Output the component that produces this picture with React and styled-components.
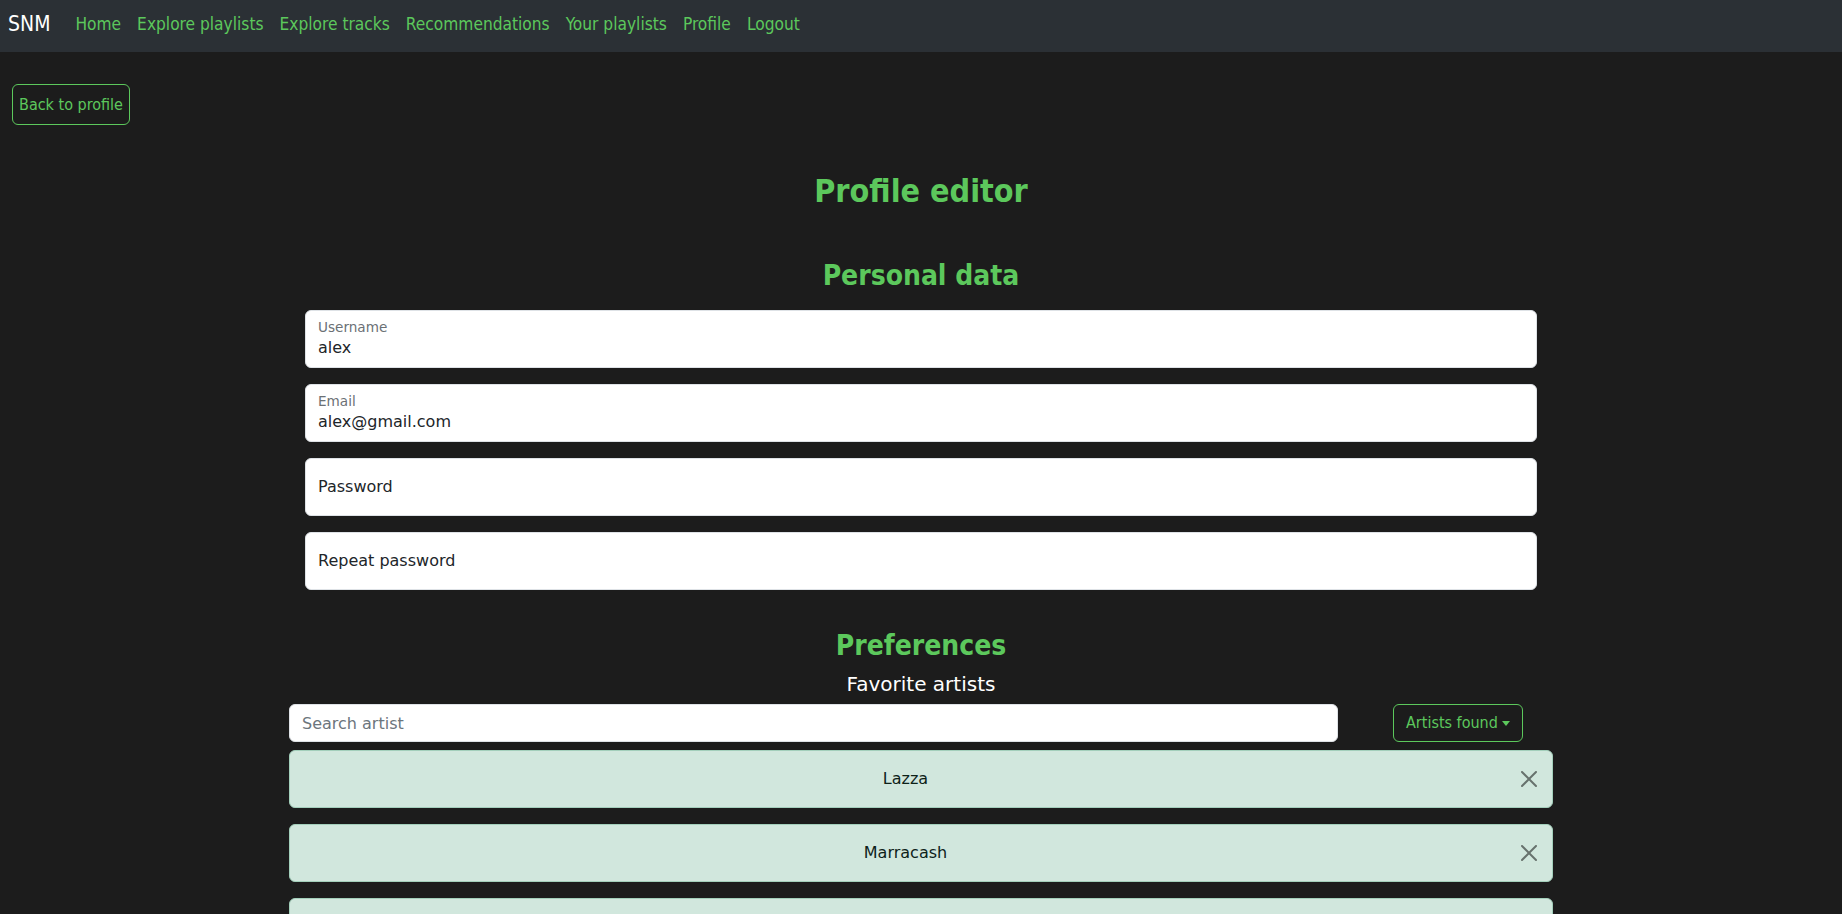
import React from 'react';
import styled, { createGlobalStyle } from 'styled-components';

const GREEN = '#5cc85c';

const GlobalStyle = createGlobalStyle`
  html {
    scrollbar-width: none;
  }
  body {
    margin: 0;
    background: #1c1c1c;
    font-family: "DejaVu Sans", Verdana, sans-serif;
  }
`;

const Navbar = styled.nav`
  display: flex;
  align-items: center;
  height: 52px;
  padding: 0 8px 4px;
  box-sizing: border-box;
  background: #2b3035;
  font-family: "DejaVu Sans Condensed", "DejaVu Sans", sans-serif;
  font-stretch: condensed;
`;

const Brand = styled.a`
  color: #fff;
  font-size: 21px;
  margin-right: 17px;
  text-decoration: none;
`;

const NavLink = styled.a`
  color: ${GREEN};
  font-size: 17.2px;
  padding: 0 8px;
  text-decoration: none;
`;

const Main = styled.main`
  padding: 32px 12px 0;
  display: flex;
  flex-direction: column;
`;

const OutlineButton = styled.button`
  display: inline-flex;
  align-items: center;
  background: transparent;
  color: ${GREEN};
  border: 1px solid ${GREEN};
  border-radius: 6px;
  font-family: "DejaVu Sans Condensed", "DejaVu Sans", sans-serif;
  font-stretch: condensed;
  font-size: 16px;
  line-height: ${p => p.$lh || '24px'};
  padding: ${p => p.$pad || '6px 12px'};
  cursor: pointer;
`;

const BackButton = styled(OutlineButton)`
  align-self: flex-start;
`;

const Caret = styled.span`
  display: inline-block;
  margin-left: 4px;
  border-top: 5px solid ${GREEN};
  border-left: 4px solid transparent;
  border-right: 4px solid transparent;
`;

const Content = styled.section`
  width: 1264px;
  margin: 0 auto;
  display: flex;
  flex-direction: column;
`;

const Heading = styled.h2`
  margin: ${p => p.$mt}px 0 0;
  text-align: center;
  color: ${GREEN};
  font-family: "DejaVu Sans Condensed", "DejaVu Sans", sans-serif;
  font-stretch: condensed;
  font-weight: bold;
  font-size: ${p => p.$size}px;
  line-height: ${p => Math.round(p.$size * 1.2)}px;
`;

const SubHeading = styled.h5`
  margin: 9px 0 0;
  text-align: center;
  color: #fff;
  font-weight: normal;
  font-size: 20px;
  line-height: 24px;
`;

const Form = styled.form`
  margin-top: 17px;
  padding: 0 16px;
  display: flex;
  flex-direction: column;
  gap: 16px;
`;

const Field = styled.label`
  display: flex;
  flex-direction: column;
  justify-content: ${p => (p.$filled ? 'flex-start' : 'center')};
  height: 58px;
  box-sizing: border-box;
  padding: ${p => (p.$filled ? '8px 12px 0' : '0 12px')};
  background: #fff;
  border: 1px solid #dee2e6;
  border-radius: 6px;
`;

const Caption = styled.span`
  font-size: 13.6px;
  line-height: 17px;
  color: #6b7075;
`;

const FieldInput = styled.input`
  border: 0;
  outline: 0;
  padding: 0;
  background: transparent;
  font-family: "DejaVu Sans", sans-serif;
  font-size: 16px;
  line-height: 24px;
  color: #212529;

  &::placeholder {
    color: #212529;
  }
`;

const SearchRow = styled.div`
  margin-top: 8px;
  display: grid;
  grid-template-columns: 1049px 1fr;
  align-items: center;
`;

const SearchInput = styled.input`
  height: 38px;
  box-sizing: border-box;
  padding: 6px 12px;
  border: 1px solid #dee2e6;
  border-radius: 6px;
  font-family: "DejaVu Sans", sans-serif;
  font-size: 16px;
  color: #212529;
  outline: 0;

  &::placeholder {
    color: #6c757d;
  }
`;

const DropdownSlot = styled.div`
  padding-left: 55px;
`;

const ArtistList = styled.div`
  margin-top: 8px;
  display: flex;
  flex-direction: column;
  gap: 16px;
`;

const Alert = styled.div`
  display: flex;
  align-items: center;
  padding: 16px 15px 16px 16px;
  background: #d1e7dd;
  border: 1px solid #a3cfbb;
  border-radius: 6px;
  color: #0d2219;
  font-size: 16px;
  line-height: 24px;
`;

const AlertText = styled.span`
  flex: 1;
  text-align: center;
`;

const CloseButton = styled.button`
  display: flex;
  margin-left: 16px;
  padding: 0;
  border: 0;
  background: transparent;
  opacity: 0.5;
  cursor: pointer;
`;

const CloseIcon = () => (
  <svg width="16" height="16" viewBox="0 0 16 16" fill="#000">
    <path d="M.293.293a1 1 0 0 1 1.414 0L8 6.586 14.293.293a1 1 0 1 1 1.414 1.414L9.414 8l6.293 6.293a1 1 0 0 1-1.414 1.414L8 9.414l-6.293 6.293a1 1 0 0 1-1.414-1.414L6.586 8 .293 1.707a1 1 0 0 1 0-1.414z" />
  </svg>
);

const links = ['Home', 'Explore playlists', 'Explore tracks', 'Recommendations', 'Your playlists', 'Profile', 'Logout'];
const artists = ['Lazza', 'Marracash', 'Sfera Ebbasta'];

export default function App() {
  return (
    <>
      <GlobalStyle />
      <Navbar>
        <Brand href="#">SNM</Brand>
        {links.map(l => (
          <NavLink key={l} href="#">
            {l}
          </NavLink>
        ))}
      </Navbar>
      <Main>
        <BackButton $pad="8px 6px" $lh="23px">
          Back to profile
        </BackButton>
        <Heading $size={32} $mt={47}>
          Profile editor
        </Heading>
        <Content>
          <Heading as="h3" $size={28} $mt={49}>
            Personal data
          </Heading>
          <Form>
            <Field $filled>
              <Caption>Username</Caption>
              <FieldInput defaultValue="alex" />
            </Field>
            <Field $filled>
              <Caption>Email</Caption>
              <FieldInput defaultValue="alex@gmail.com" />
            </Field>
            <Field>
              <FieldInput type="password" placeholder="Password" />
            </Field>
            <Field>
              <FieldInput type="password" placeholder="Repeat password" />
            </Field>
          </Form>
          <Heading as="h3" $size={28} $mt={39}>
            Preferences
          </Heading>
          <SubHeading>Favorite artists</SubHeading>
          <SearchRow>
            <SearchInput placeholder="Search artist" />
            <DropdownSlot>
              <OutlineButton>
                Artists found
                <Caret />
              </OutlineButton>
            </DropdownSlot>
          </SearchRow>
          <ArtistList>
            {artists.map(a => (
              <Alert key={a}>
                <AlertText>{a}</AlertText>
                <CloseButton aria-label="Remove">
                  <CloseIcon />
                </CloseButton>
              </Alert>
            ))}
          </ArtistList>
        </Content>
      </Main>
    </>
  );
}
